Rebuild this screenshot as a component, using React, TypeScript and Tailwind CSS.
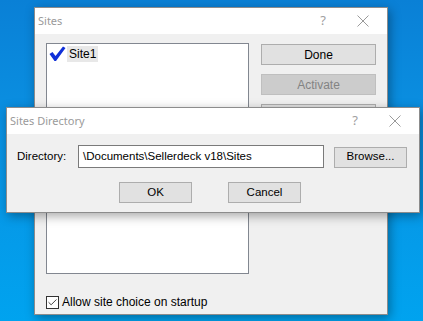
import { Check } from "lucide-react";

const winBtn =
  "flex items-center justify-center border border-[#adadad] bg-[#e1e1e1] text-black";

const Caption = ({ title }: { title: string }) => (
  <div className="flex h-[26px] w-full items-center bg-white">
    <span className="pl-[3px] pt-[1px] font-['Noto_Sans',sans-serif] text-[11px] text-[#9a9a9a]">
      {title}
    </span>
    <span className="ml-auto w-[22px] text-center font-['Noto_Sans',sans-serif] text-[13px] text-[#a0a0a0]">?</span>
    <span className="ml-[22px] mr-[17px] flex w-[14px] items-center justify-center">
      <svg width="12" height="12" viewBox="0 0 12 12">
        <path d="M0.5 0.5 L11.5 11.5 M11.5 0.5 L0.5 11.5" stroke="#9a9a9a" strokeWidth="1" />
      </svg>
    </span>
  </div>
);

const SitesWindow = () => (
  <div className="absolute left-[34px] top-[7px] flex h-[308px] w-[354px] flex-col border border-[#8c8c8c] bg-[#f0f0f0] shadow-[2px_3px_10px_rgba(0,0,0,0.35)]">
    <Caption title="Sites" />
    <div className="flex flex-1 flex-col px-[11px] pt-[9px] font-['Liberation_Sans',sans-serif] text-[12px]">
      <div className="flex gap-[12px]">
        <div className="h-[231px] w-[204px] border border-[#828790] bg-white p-[2px]">
          <div className="flex items-center">
            <svg width="17" height="16" viewBox="0 0 17 16" className="mr-[1px]">
              <path d="M0.5 8 L3.5 6 L6.5 10 L14 0.5 L16.5 2 L7 15 L5.5 15 Z" fill="#1030d8" />
            </svg>
            <span className="bg-[#e8e8e8] px-[2px] py-[1px] leading-[14px] text-black">Site1</span>
          </div>
        </div>
        <div className="flex flex-col gap-[9px] pt-[1px]">
          <div className={`${winBtn} h-[21px] w-[115px]`}>Done</div>
          <div className="flex h-[21px] w-[115px] items-center justify-center border border-[#bfbfbf] bg-[#cccccc] text-[#838383]">
            Activate
          </div>
          <div className={`${winBtn} h-[21px] w-[115px]`}>Delete</div>
        </div>
      </div>
      <label className="mt-[19px] flex items-center gap-[3px] text-black">
        <span className="flex h-[13px] w-[13px] items-center justify-center border border-[#333] bg-white">
          <Check size={11} strokeWidth={2} color="#333" />
        </span>
        <span className="text-[12px]">Allow site choice on startup</span>
      </label>
    </div>
  </div>
);

const DirectoryDialog = () => (
  <div className="absolute left-[6px] top-[107px] flex h-[106px] w-[414px] flex-col border border-[#8c8c8c] bg-[#f0f0f0] shadow-[2px_3px_10px_rgba(0,0,0,0.35)]">
    <Caption title="Sites Directory" />
    <div className="flex flex-col px-[10px] pt-[11px] font-['Liberation_Sans',sans-serif] text-[11.5px] text-black">
      <div className="flex items-center">
        <span className="w-[61px]">Directory:</span>
        <div className="flex h-[23px] w-[246px] items-center border border-[#7a7a7a] bg-white pl-[4px]">
          \Documents\Sellerdeck v18\Sites
        </div>
        <div className={`${winBtn} ml-[10px] mt-[1px] h-[21px] w-[73px]`}>Browse...</div>
      </div>
      <div className="mt-[14px] flex justify-center gap-[36px] pr-[6px]">
        <div className={`${winBtn} h-[21px] w-[73px]`}>OK</div>
        <div className={`${winBtn} h-[21px] w-[73px]`}>Cancel</div>
      </div>
    </div>
  </div>
);

export default function App() {
  return (
    <div className="relative h-[321px] w-[423px] overflow-hidden bg-[linear-gradient(180deg,#0a80d6_0%,#0a91e2_40%,#00a3ef_100%)]">
      <SitesWindow />
      <DirectoryDialog />
    </div>
  );
}
